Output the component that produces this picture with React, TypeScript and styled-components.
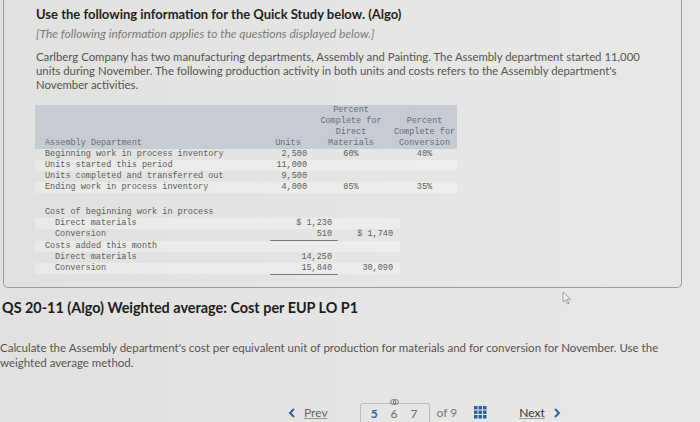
import styled, { createGlobalStyle } from "styled-components";

const GlobalStyle = createGlobalStyle`
  body {
    margin: 0;
    background: #e3e3e1;
    font-family: Lato, "Liberation Sans", sans-serif;
  }
`;

const Page = styled.div`
  position: relative;
  width: 700px;
  height: 422px;
  overflow: hidden;
  background: linear-gradient(90deg, #e1e1df 0%, #e6e6e4 60%, #e8e8e6 100%);
`;

const InfoBox = styled.section`
  box-sizing: border-box;
  margin-left: 3px;
  width: 679px;
  height: 288px;
  padding: 6px 0 0 32px;
  border: 1px solid #9c9c9a;
  border-top: none;
  border-radius: 0 0 5px 5px;
`;

const Heading = styled.h1`
  margin: 0;
  font-size: 13px;
  line-height: 16px;
  font-weight: 700;
  color: #1f1f1f;
`;

const Note = styled.p`
  margin: 4px 0 0;
  font-size: 12px;
  line-height: 15px;
  font-style: italic;
  color: #7a7a7a;
`;

const Para = styled.p`
  margin: 9px 0 0;
  font-size: 11.35px;
  line-height: 14px;
  color: #545454;
  white-space: nowrap;
`;

const DataTable = styled.table`
  margin: 13px 0 0 -1px;
  border-collapse: collapse;
  font-family: "Liberation Mono", "DejaVu Sans Mono", monospace;
  font-size: 8.5px;
  line-height: 11px;
  color: #5c5c5c;
  table-layout: fixed;

  th,
  td {
    box-sizing: border-box;
  }

  tbody tr:nth-child(even) td {
    background: rgba(255, 255, 255, 0.28);
  }
`;

const CostTable = styled(DataTable)`
  margin-top: 14px;
`;

const HeadRow = styled.tr`
  background: #c7cbd4;
`;

type CellProps = {
  $w?: number;
  $align?: "left" | "right" | "center";
  $indent?: number;
  $pad?: number;
  $rule?: boolean;
};

const HeadCell = styled.th<CellProps>`
  width: ${(p) => (p.$w ? `${p.$w}px` : "auto")};
  padding: 0 ${(p) => p.$pad ?? 0}px 0 ${(p) => p.$indent ?? 0}px;
  text-align: ${(p) => p.$align ?? "center"};
  vertical-align: bottom;
  font-weight: 400;
  color: #676b74;
`;

const Cell = styled.td<CellProps>`
  padding: 0 ${(p) => p.$pad ?? 0}px 0 ${(p) => p.$indent ?? 0}px;
  height: 11px;
  text-align: ${(p) => p.$align ?? "left"};
  white-space: pre;
  border-bottom: ${(p) => (p.$rule ? "1px solid #7a7a7a" : "none")};
`;

const QuestionTitle = styled.h2`
  margin: 11px 0 0 2px;
  font-size: 14.4px;
  line-height: 18px;
  font-weight: 700;
  color: #1c1c1c;
`;

const Prompt = styled.p`
  margin: 24px 0 0;
  font-size: 11.5px;
  line-height: 14.5px;
  color: #545454;
  white-space: nowrap;
`;

const Pager = styled.nav`
  display: flex;
  align-items: flex-start;
  margin-top: 33px;
  padding-left: 288px;
  font-size: 12px;
  line-height: 20px;
  color: #5a5a5a;
`;

const NavLink = styled.span<{ $dark?: boolean }>`
  display: flex;
  align-items: center;
  gap: 8px;
  color: ${(p) => (p.$dark ? "#333" : "#666")};

  u {
    text-decoration-color: #999;
  }
`;

const Chevron = styled.svg`
  width: 8px;
  height: 10px;
`;

const PageBox = styled.div`
  display: flex;
  gap: 13px;
  margin-left: 32px;
  padding: 0 11px 0 10px;
  height: 30px;
  border: 1px solid #bdbdbb;
  border-bottom: none;
  border-radius: 3px 3px 0 0;
`;

const PageNum = styled.span<{ $current?: boolean }>`
  position: relative;
  font-weight: ${(p) => (p.$current ? 700 : 400)};
  color: ${(p) => (p.$current ? "#2a64a3" : "#6a6a6a")};
`;

const LinkMark = styled.svg`
  position: absolute;
  left: -1px;
  top: -5px;
  width: 9px;
  height: 6px;
`;

const OfTotal = styled.span`
  margin-left: 7px;
  color: #777;
`;

const GridIcon = styled.svg`
  margin: 3px 0 0 17px;
  width: 13px;
  height: 13px;
`;

const NextWrap = styled.div`
  margin-left: 32px;
`;

const Cursor = styled.svg`
  position: absolute;
  left: 562px;
  top: 291px;
  width: 10px;
  height: 14px;
`;

const unitRows = [
  ["Beginning work in process inventory", "2,500", "60%", "40%"],
  ["Units started this period", "11,000", "", ""],
  ["Units completed and transferred out", "9,500", "", ""],
  ["Ending work in process inventory", "4,000", "85%", "35%"],
];

const costRows: { label: string; indent: boolean; a: string; b: string; rule?: boolean }[] = [
  { label: "Cost of beginning work in process", indent: false, a: "", b: "" },
  { label: "Direct materials", indent: true, a: "$ 1,230", b: "" },
  { label: "Conversion", indent: true, a: "510", b: "$ 1,740", rule: true },
  { label: "Costs added this month", indent: false, a: "", b: "" },
  { label: "Direct materials", indent: true, a: "14,250", b: "" },
  { label: "Conversion", indent: true, a: "15,840", b: "30,090", rule: true },
];

const App = () => {
  return (
    <>
      <GlobalStyle />
      <Page>
        <InfoBox>
          <Heading>Use the following information for the Quick Study below. (Algo)</Heading>
          <Note>[The following information applies to the questions displayed below.]</Note>
          <Para>
            Carlberg Company has two manufacturing departments, Assembly and Painting. The Assembly department started 11,000
            <br />
            units during November. The following production activity in both units and costs refers to the Assembly department's
            <br />
            November activities.
          </Para>

          <DataTable>
            <thead>
              <HeadRow>
                <HeadCell $w={231} $align="left" $indent={10}>
                  Assembly Department
                </HeadCell>
                <HeadCell $w={44}>Units</HeadCell>
                <HeadCell $w={82}>
                  Percent
                  <br />
                  Complete for
                  <br />
                  Direct
                  <br />
                  Materials
                </HeadCell>
                <HeadCell $w={65}>
                  Percent
                  <br />
                  Complete for
                  <br />
                  Conversion
                </HeadCell>
              </HeadRow>
            </thead>
            <tbody>
              {unitRows.map((r, i) => (
                <tr key={i}>
                  <Cell $indent={10}>{r[0]}</Cell>
                  <Cell $align="right" $pad={3}>
                    {r[1]}
                  </Cell>
                  <Cell $align="center">{r[2]}</Cell>
                  <Cell $align="center">{r[3]}</Cell>
                </tr>
              ))}
            </tbody>
          </DataTable>

          <CostTable>
            <colgroup>
              <col style={{ width: 235 }} />
              <col style={{ width: 68 }} />
              <col style={{ width: 62 }} />
            </colgroup>
            <tbody>
              {costRows.map((r, i) => (
                <tr key={i}>
                  <Cell $indent={r.indent ? 20 : 10}>{r.label}</Cell>
                  <Cell $align="right" $pad={6} $rule={r.rule}>
                    {r.a}
                  </Cell>
                  <Cell $align="right" $pad={7}>
                    {r.b}
                  </Cell>
                </tr>
              ))}
            </tbody>
          </CostTable>
        </InfoBox>

        <QuestionTitle>QS 20-11 (Algo) Weighted average: Cost per EUP LO P1</QuestionTitle>
        <Prompt>
          Calculate the Assembly department's cost per equivalent unit of production for materials and for conversion for November. Use the
          <br />
          weighted average method.
        </Prompt>

        <Pager>
          <NavLink>
            <Chevron viewBox="0 0 8 10">
              <path d="M6 1 L2 5 L6 9" fill="none" stroke="#2a64a3" strokeWidth="2" />
            </Chevron>
            <u>Prev</u>
          </NavLink>
          <PageBox>
            <PageNum $current>5</PageNum>
            <PageNum>
              <LinkMark viewBox="0 0 9 6">
                <rect x="0.6" y="0.6" width="5" height="4.8" rx="2.4" fill="none" stroke="#777" strokeWidth="1" />
                <rect x="3.4" y="0.6" width="5" height="4.8" rx="2.4" fill="none" stroke="#777" strokeWidth="1" />
              </LinkMark>
              6
            </PageNum>
            <PageNum>7</PageNum>
          </PageBox>
          <OfTotal>of 9</OfTotal>
          <GridIcon viewBox="0 0 13 13">
            {[0, 4.5, 9].map((y) =>
              [0, 4.5, 9].map((x) => <rect key={`${x}-${y}`} x={x} y={y} width="3.5" height="3.5" fill="#2a64a3" />)
            )}
          </GridIcon>
          <NextWrap>
            <NavLink $dark>
              <u>Next</u>
              <Chevron viewBox="0 0 8 10">
                <path d="M2 1 L6 5 L2 9" fill="none" stroke="#2a64a3" strokeWidth="2" />
              </Chevron>
            </NavLink>
          </NextWrap>
        </Pager>

        <Cursor viewBox="0 0 10 14">
          <path d="M1 1 L1 11 L3.5 8.8 L5.5 13 L7 12.3 L5 8.2 L8.5 8.2 Z" fill="#f4f4f4" stroke="#8a8a8a" strokeWidth="0.8" />
        </Cursor>
      </Page>
    </>
  );
};

export default App;
